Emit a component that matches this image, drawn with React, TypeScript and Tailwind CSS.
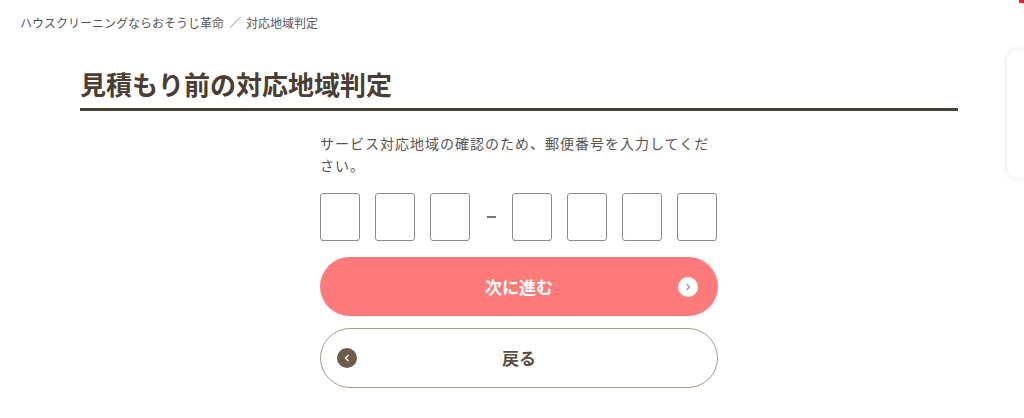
import React from "react";

const font = { fontFamily: '"Noto Sans CJK JP", "Noto Sans", sans-serif' };

function Box() {
  return <div className="w-[40px] h-[48px] border-[1.5px] border-[#8a8a8a] rounded-[3px] bg-white" />;
}

export default function App() {
  return (
    <div className="relative w-[1024px] h-[418px] bg-white overflow-hidden" style={font}>
      <div className="absolute top-0 right-0 w-[5px] h-[3px] bg-[#ff2020]" />
      <div className="absolute top-[50px] right-0 w-[17px] h-[128px] rounded-l-[10px] bg-white shadow-[0_0_6px_rgba(0,0,0,0.12)]" />

      <div className="pt-[15px] pl-[20px] text-[12px] leading-[16px] text-[#555]">
        ハウスクリーニングならおそうじ革命<span className="mx-[5px] text-[#888]">／</span>対応地域判定
      </div>

      <div className="mx-[80px] w-[878px] mt-[36px]">
        <h1 className="text-[26px] leading-[33px] font-bold text-[#4a3e33] pb-[8px] border-b-[3px] border-[#4a3e33]">
          見積もり前の対応地域判定
        </h1>

        <div className="w-[398px] mx-auto mt-[21px]">
          <p className="text-[14px] leading-[22px] text-[#555] tracking-[1px]">
            サービス対応地域の確認のため、郵便番号を入力してください。
          </p>

          <div className="flex items-center mt-[17px]">
            <div className="flex gap-[15px]">
              <Box />
              <Box />
              <Box />
            </div>
            <div className="w-[42px] flex justify-center">
              <div className="w-[9px] h-[1.5px] bg-[#777]" />
            </div>
            <div className="flex gap-[15px]">
              <Box />
              <Box />
              <Box />
              <Box />
            </div>
          </div>

          <button className="relative mt-[16px] w-[398px] h-[59px] rounded-full bg-[#ff7b7b] flex items-center justify-center text-white text-[17px] font-bold">
            次に進む
            <span className="absolute right-[20px] top-1/2 -translate-y-1/2 w-[20px] h-[20px] rounded-full bg-white flex items-center justify-center">
              <svg width="6" height="8" viewBox="0 0 6 8">
                <path d="M1.5 1 L4.5 4 L1.5 7" fill="none" stroke="#999" strokeWidth="1.2" />
              </svg>
            </span>
          </button>

          <button className="relative mt-[12px] w-[398px] h-[60px] rounded-full bg-white border-[1.5px] border-[#a8998a] flex items-center justify-center text-[#5a4d41] text-[17px] font-bold">
            戻る
            <span className="absolute left-[16px] top-1/2 -translate-y-1/2 w-[20px] h-[20px] rounded-full bg-[#6e5c4a] flex items-center justify-center">
              <svg width="6" height="8" viewBox="0 0 6 8">
                <path d="M4.5 1 L1.5 4 L4.5 7" fill="none" stroke="#fff" strokeWidth="1.2" />
              </svg>
            </span>
          </button>
        </div>
      </div>
    </div>
  );
}
